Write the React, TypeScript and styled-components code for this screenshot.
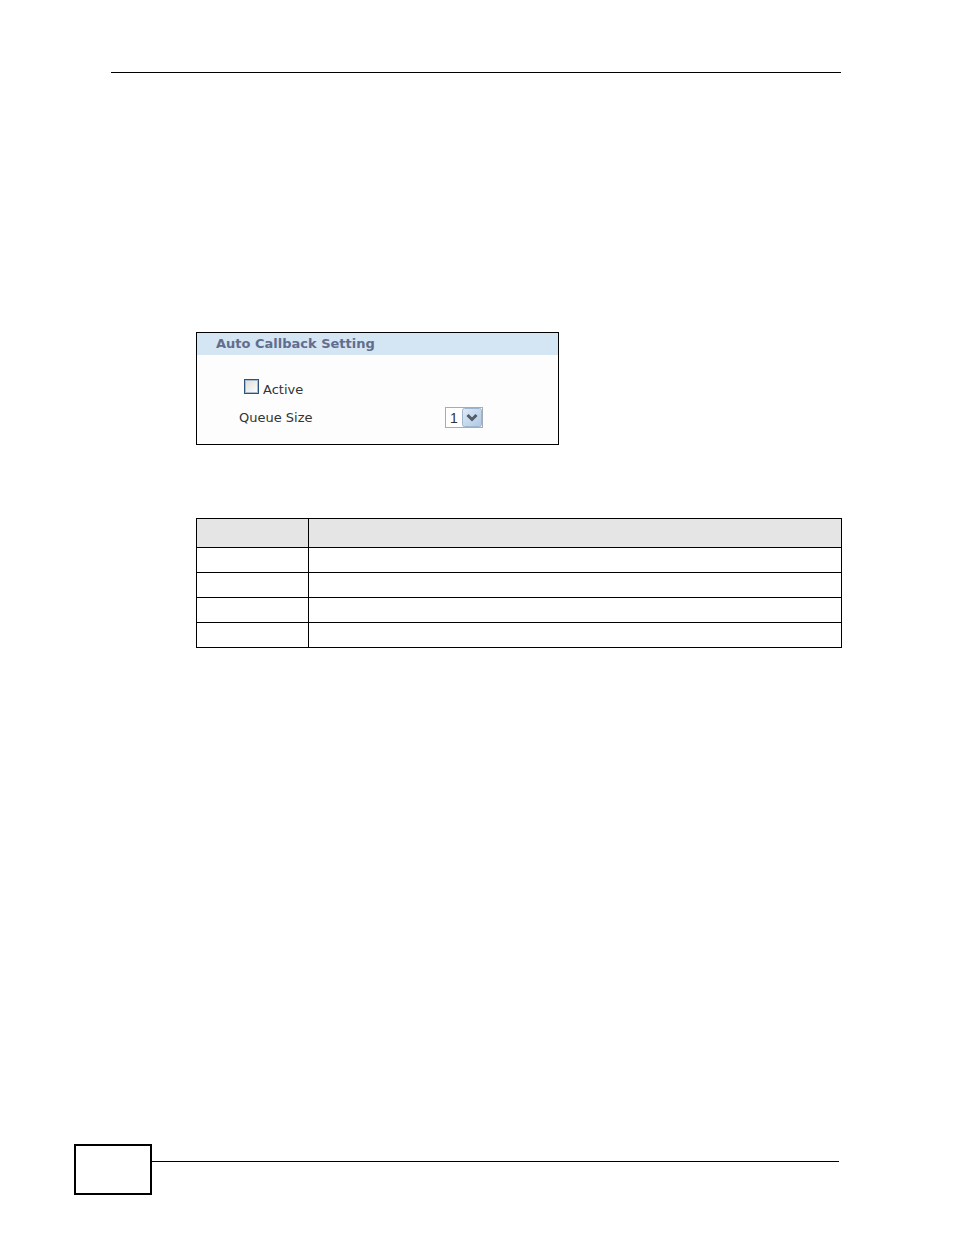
import React from "react";
import styled, { createGlobalStyle } from "styled-components";

const GlobalStyle = createGlobalStyle`
  *, *::before, *::after { box-sizing: border-box; }
  body {
    margin: 0;
    background: #fff;
    color: #333;
    font-family: "DejaVu Sans", Verdana, sans-serif;
    font-size: 13px;
  }
`;

const Page = styled.div`
  min-height: 100vh;
  display: flex;
  flex-direction: column;
  padding: 72px 112px 40px 74px;
`;

const TopRule = styled.hr`
  width: auto;
  height: 1px;
  margin: 0 1px 0 37px;
  border: 0;
  background: #000;
`;

const Main = styled.main`
  flex: 1;
  margin-left: 122px;
  padding-top: 259px;
`;

const Panel = styled.section`
  width: 100%;
  max-width: 363px;
  border: 1px solid #000;
  background: #fdfdfd;
`;

const PanelTitle = styled.h2`
  margin: 0;
  padding-left: 19px;
  background: #d4e5f3;
  color: #626d8e;
  font-size: 13px;
  font-weight: bold;
  line-height: 22px;
`;

const PanelBody = styled.form`
  display: flex;
  flex-direction: column;
  gap: 7px;
  padding: 23px 75px 16px 42px;
`;

const CheckRow = styled.label`
  display: flex;
  align-items: center;
  gap: 4px;
  height: 22px;
  padding-left: 5px;
`;

const Checkbox = styled.input`
  appearance: none;
  width: 15px;
  height: 15px;
  margin: 0 0 6px;
  border: 1px solid #2a5480;
  background: linear-gradient(135deg, #dcdcd7, #fff);
  box-shadow: inset 0 0 0 1px #a9bccd;

  &:checked {
    background: #2a5480;
  }
`;

const FieldRow = styled.div`
  display: flex;
  align-items: center;
  justify-content: space-between;
`;

const SelectBox = styled.div`
  position: relative;
  width: 38px;
  height: 21px;
`;

const Select = styled.select`
  appearance: none;
  width: 100%;
  height: 100%;
  padding: 0 0 0 4px;
  border: 1px solid #a5acb5;
  border-radius: 0;
  background: #fff;
  color: #333;
  font-family: "Liberation Sans", Arial, sans-serif;
  font-size: 14px;
`;

const Arrow = styled.svg`
  position: absolute;
  top: 1px;
  right: 1px;
  pointer-events: none;
`;

const Table = styled.table`
  width: 100%;
  margin-top: 73px;
  border-collapse: collapse;
  table-layout: fixed;
`;

const HeadCell = styled.th<{ $width?: number }>`
  width: ${({ $width }) => ($width ? `${$width}px` : "auto")};
  height: 29px;
  padding: 0;
  border: 1px solid #000;
  background: #e5e5e5;
`;

const Cell = styled.td`
  height: 25px;
  padding: 0;
  border: 1px solid #000;
`;

const Footer = styled.footer`
  display: flex;
  margin-right: 3px;
`;

const PageNumber = styled.div`
  width: 78px;
  height: 51px;
  border: 2px solid #000;
`;

const FooterRule = styled.hr`
  flex: 1;
  height: 1px;
  margin: 17px 0 0;
  border: 0;
  background: #000;
`;

const rows = [0, 1, 2, 3];

export default function App() {
  return (
    <Page>
      <GlobalStyle />
      <TopRule />
      <Main>
        <Panel>
          <PanelTitle>Auto Callback Setting</PanelTitle>
          <PanelBody>
            <CheckRow>
              <Checkbox type="checkbox" name="active" />
              Active
            </CheckRow>
            <FieldRow>
              <label htmlFor="queue-size">Queue Size</label>
              <SelectBox>
                <Select id="queue-size" defaultValue="1">
                  <option>1</option>
                  <option>2</option>
                  <option>3</option>
                </Select>
                <Arrow width="20" height="19" viewBox="0 0 20 19" aria-hidden="true">
                  <defs>
                    <linearGradient id="arrow-face" x1="0" y1="0" x2="1" y2="1">
                      <stop offset="0" stopColor="#dfebf8" />
                      <stop offset="1" stopColor="#aec9e3" />
                    </linearGradient>
                  </defs>
                  <rect x="0.5" y="0.5" width="19" height="18" rx="2" fill="url(#arrow-face)" stroke="#9fb5cd" />
                  <path d="M5.5 7l4.5 4.5L14.5 7" fill="none" stroke="#535c69" strokeWidth="3" />
                </Arrow>
              </SelectBox>
            </FieldRow>
          </PanelBody>
        </Panel>
        <Table>
          <thead>
            <tr>
              <HeadCell scope="col" $width={112} />
              <HeadCell scope="col" />
            </tr>
          </thead>
          <tbody>
            {rows.map((row) => (
              <tr key={row}>
                <Cell />
                <Cell />
              </tr>
            ))}
          </tbody>
        </Table>
      </Main>
      <Footer>
        <PageNumber />
        <FooterRule />
      </Footer>
    </Page>
  );
}
